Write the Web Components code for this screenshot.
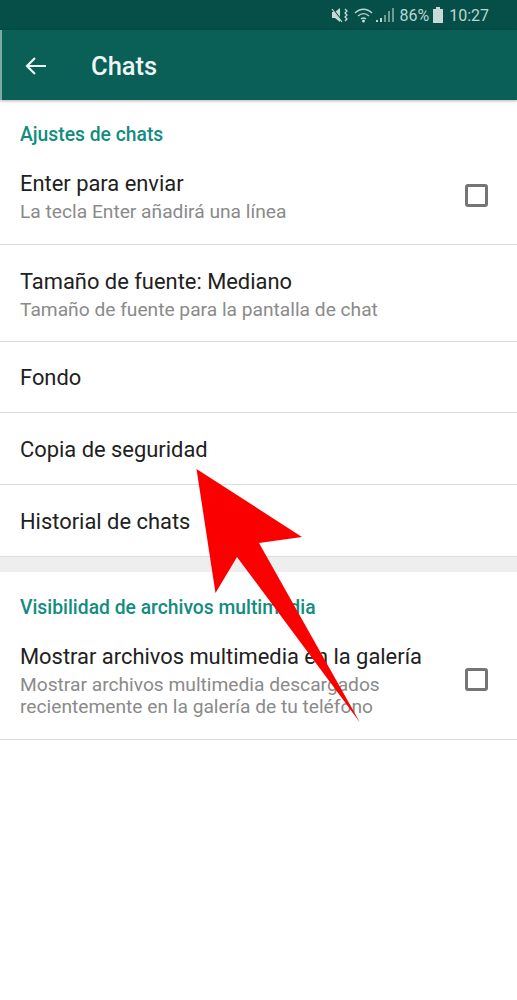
<!DOCTYPE html>
<html lang="es">
<head>
<meta charset="utf-8">
<title>Chats</title>
<style>
  html, body { margin: 0; padding: 0; background: #fff; }
  body { font-family: Roboto, "Liberation Sans", sans-serif; }
  #screen { position: relative; width: 517px; height: 1000px; overflow: hidden; }
</style>
</head>
<body>
<div id="screen">
  <status-bar></status-bar>
  <app-bar title="Chats"></app-bar>
  <section-title style="height:56px;padding-top:25px">Ajustes de chats</section-title>
  <setting-row height="89" pad="10" check title="Enter para enviar">La tecla Enter añadirá una línea</setting-row>
  <setting-row height="97" title="Tamaño de fuente: Mediano">Tamaño de fuente para la pantalla de chat</setting-row>
  <setting-row height="71" title="Fondo"></setting-row>
  <setting-row height="72" title="Copia de seguridad"></setting-row>
  <setting-row height="72" title="Historial de chats"></setting-row>
  <section-gap></section-gap>
  <section-title style="height:60px;padding-top:26px">Visibilidad de archivos multimedia</section-title>
  <setting-row height="108" pad="12" check title="Mostrar archivos multimedia en la galería">Mostrar archivos multimedia descargados<br>recientemente en la galería de tu teléfono</setting-row>
  <red-arrow></red-arrow>
</div>

<script>
class StatusBar extends HTMLElement {
  constructor() {
    super();
    this.attachShadow({ mode: "open" });
    this.shadowRoot.innerHTML = `
      <style>
        :host { display: flex; justify-content: flex-end; align-items: center; height: 30px; box-sizing: border-box;
          padding-right: 28px; background: #054f48; color: #bcd6d1; font-size: 16px; }
        svg { display: block; }
        .mute { margin-right: 5px; }
        .wifi { margin-right: 1px; }
        .pct { margin-left: 5px; }
        .batt { margin: 0 6px 0 4px; }
      </style>
      <svg class="mute" width="18" height="16" viewBox="0 0 18 16">
        <path d="M1 5h3l5-4v14l-5-4H1z" fill="#c6dbd7"/>
        <path d="M1 1l11 14" stroke="#054f48" stroke-width="1.5"/>
        <path d="M1 2l10 13" stroke="#c6dbd7" stroke-width="1.2"/>
        <path d="M14 2l2 2-2 2 2 2-2 2 2 2-2 2" fill="none" stroke="#c6dbd7" stroke-width="1.3"/>
      </svg>
      <svg class="wifi" width="20" height="16" viewBox="0 0 20 16" fill="none" stroke="#bcd6d1" stroke-width="1.4">
        <path d="M1 6c5-5 12-5 17 0"/>
        <path d="M4 9c3.500-3 7.500-3 11 0"/>
        <path d="M7 12c1.500-1.300 3.500-1.300 5 0"/>
        <circle cx="9.500" cy="14" r=".8" fill="#bcd6d1"/>
      </svg>
      <svg width="19" height="16" viewBox="0 0 19 16">
        <path d="M1 15h2v-2H1zM5 15h2v-4H5z" fill="#bcd6d1"/>
        <path d="M9 15h2V8H9zM13 15h2V4h-2zM17 15h2V1h-2z" fill="#6d9a93"/>
      </svg>
      <span class="pct">86%</span>
      <svg class="batt" width="10" height="16" viewBox="0 0 10 16">
        <path d="M3 0h4v2h3v14H0V2h3z" fill="#c6dbd7"/>
      </svg>
      <span>10:27</span>`;
  }
}
customElements.define("status-bar", StatusBar);

class AppBar extends HTMLElement {
  constructor() {
    super();
    this.attachShadow({ mode: "open" });
  }
  connectedCallback() {
    this.shadowRoot.innerHTML = `
      <style>
        :host { display: flex; align-items: center; height: 70px; box-sizing: border-box; padding-left: 24px; padding-top: 2px;
          background: #0a5f56; color: #eef6f4; border-left: 2px solid #7fa9a3;
          box-shadow: 0 1px 3px rgba(0,0,0,.3); position: relative; }
        svg { display: block; margin-left: -2px; }
        h1 { margin: 2px 0 0 43px; font-size: 25.500px; font-weight: 500; line-height: 1; }
      </style>
      <svg width="24" height="24" viewBox="0 0 24 24" fill="none" stroke="#eef6f4" stroke-width="2.200">
        <path d="M22 12H3M11 4l-8 8 8 8"/>
      </svg>
      <h1>${this.getAttribute("title")}</h1>`;
  }
}
customElements.define("app-bar", AppBar);

class SectionTitle extends HTMLElement {
  constructor() {
    super();
    this.attachShadow({ mode: "open" });
    this.shadowRoot.innerHTML = `
      <style>
        :host { display: block; box-sizing: border-box; padding-left: 20px; color: #128c7e;
          font-size: 19.300px; font-weight: 500; line-height: 20px; }
      </style>
      <slot></slot>`;
  }
}
customElements.define("section-title", SectionTitle);

class SettingRow extends HTMLElement {
  constructor() {
    super();
    this.attachShadow({ mode: "open" });
  }
  connectedCallback() {
    const check = this.hasAttribute("check");
    const pad = this.getAttribute("pad") || 0;
    this.shadowRoot.innerHTML = `
      <style>
        :host { display: flex; align-items: center; box-sizing: border-box; padding: 2px 29px ${pad}px 20px;
          height: ${this.getAttribute("height")}px; border-bottom: 1px solid #dcdcdc; }
        .text { flex: 1; min-width: 0; }
        .title { color: #212121; font-size: 21.900px; line-height: 28px; white-space: nowrap; }
        .sub { color: #8a8a8a; font-size: 19.200px; line-height: 22px; margin-top: 3px; white-space: nowrap; }
        .box { width: 23px; height: 23px; box-sizing: border-box; border: 3px solid #757575; border-radius: 3px; flex: none; margin-top: -2px; }
      </style>
      <div class="text">
        <div class="title">${this.getAttribute("title")}</div>
        ${this.innerHTML.trim() ? '<div class="sub"><slot></slot></div>' : ""}
      </div>
      ${check ? '<div class="box"></div>' : ""}`;
  }
}
customElements.define("setting-row", SettingRow);

class SectionGap extends HTMLElement {
  constructor() {
    super();
    this.attachShadow({ mode: "open" });
    this.shadowRoot.innerHTML = `
      <style>
        :host { display: block; height: 15px; background: #eeeeee; }
      </style>`;
  }
}
customElements.define("section-gap", SectionGap);

class RedArrow extends HTMLElement {
  constructor() {
    super();
    this.attachShadow({ mode: "open" });
    this.shadowRoot.innerHTML = `
      <style>
        :host { position: absolute; left: 0; top: 0; display: block; width: 517px; height: 1000px; pointer-events: none; }
        svg { display: block; }
      </style>
      <svg width="517" height="1000" viewBox="0 0 517 1000">
        <polygon points="196.500,469 302,537 259,543 360,722.500 237,557 215.500,593" fill="#fb0000"/>
      </svg>`;
  }
}
customElements.define("red-arrow", RedArrow);
</script>
</body>
</html>
